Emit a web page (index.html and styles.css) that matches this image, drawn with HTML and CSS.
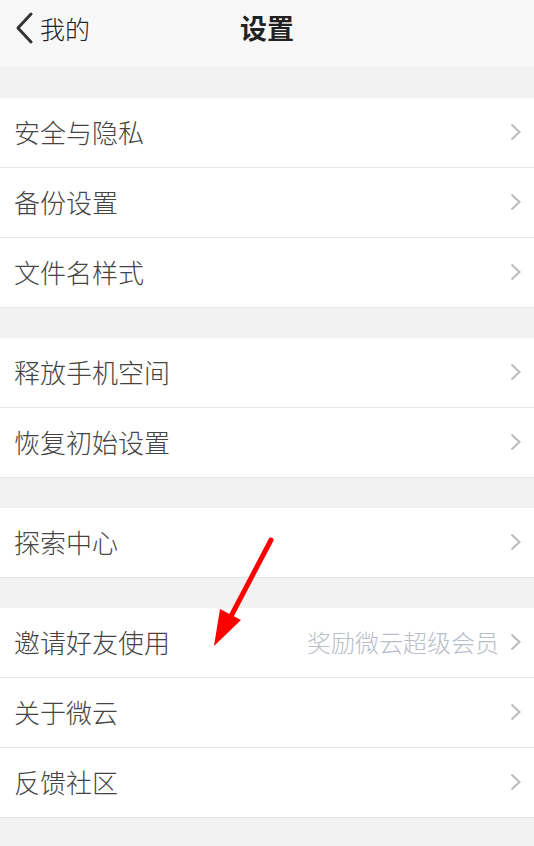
FILE: index.html
```html
<!DOCTYPE html>
<html lang="zh-CN">
<head>
<meta charset="utf-8">
<title>设置</title>
<link rel="stylesheet" href="styles.css">
</head>
<body>
<div class="page">
  <header class="nav">
    <div class="back">
      <svg class="back-icon" width="20" height="32" viewBox="0 0 20 32"><path d="M17 2 L4 16 L17 30" fill="none" stroke="#333" stroke-width="3" stroke-linecap="round" stroke-linejoin="round"/></svg>
      <span class="back-text">我的</span>
    </div>
    <div class="title">设置</div>
  </header>

  <section class="group">
    <div class="row"><span class="label">安全与隐私</span><span class="chev"></span></div>
    <div class="row"><span class="label">备份设置</span><span class="chev"></span></div>
    <div class="row"><span class="label">文件名样式</span><span class="chev"></span></div>
  </section>

  <section class="group">
    <div class="row"><span class="label">释放手机空间</span><span class="chev"></span></div>
    <div class="row"><span class="label">恢复初始设置</span><span class="chev"></span></div>
  </section>

  <section class="group">
    <div class="row"><span class="label">探索中心</span><span class="chev"></span></div>
  </section>

  <section class="group">
    <div class="row"><span class="label">邀请好友使用</span><span class="hint">奖励微云超级会员</span><span class="chev"></span></div>
    <div class="row"><span class="label">关于微云</span><span class="chev"></span></div>
    <div class="row"><span class="label">反馈社区</span><span class="chev"></span></div>
  </section>

  <svg class="arrow" width="534" height="846" viewBox="0 0 534 846">
    <line x1="271" y1="540" x2="229" y2="620" stroke="#ff0000" stroke-width="5" stroke-linecap="round"/>
    <polygon points="214,646 220,609 241,620" fill="#ff0000"/>
  </svg>
</div>
</body>
</html>
```

FILE: styles.css
```css
html, body {
  margin: 0;
  padding: 0;
}
body {
  background: #f2f2f2;
  font-family: "Noto Sans CJK SC", "Noto Sans", sans-serif;
  color: #333;
}
.page {
  position: relative;
  width: 534px;
  height: 846px;
  overflow: hidden;
  background: #f2f2f2;
}
.nav {
  position: relative;
  height: 67px;
  background: #f8f8f8;
  display: flex;
  align-items: center;
  justify-content: center;
  margin-bottom: 31px;
}
.back {
  position: absolute;
  left: 14px;
  top: 11px;
  display: flex;
  align-items: center;
  gap: 6px;
}
.back-icon {
  display: block;
}
.back-text {
  font-size: 25px;
  line-height: 34px;
  color: #222;
  font-weight: 300;
}
.title {
  font-size: 27px;
  font-weight: 700;
  color: #222;
  line-height: 34px;
  margin-top: -12px;
}
.group {
  background: #fff;
  margin-bottom: 30px;
}
.row {
  height: 69px;
  border-bottom: 1px solid #e6e6e6;
  display: flex;
  align-items: center;
  padding: 0 13px 2px 14px;
  box-sizing: border-box;
  height: 70px;
}
.label {
  font-size: 26px;
  color: #444;
  font-weight: 300;
  flex: 1;
}
.hint {
  font-size: 24px;
  color: #b9bdc8;
  font-weight: 300;
  margin-right: 11px;
}
.chev {
  width: 11px;
  height: 18px;
  background: no-repeat center / 11px 18px url("data:image/svg+xml;utf8,<svg xmlns='http://www.w3.org/2000/svg' width='11' height='18' viewBox='0 0 11 18'><path d='M1.5 1.5 L9.5 9 L1.5 16.5' fill='none' stroke='%23bbbbbb' stroke-width='2'/></svg>");
}
.arrow {
  position: absolute;
  left: 0;
  top: 0;
  pointer-events: none;
}
```
